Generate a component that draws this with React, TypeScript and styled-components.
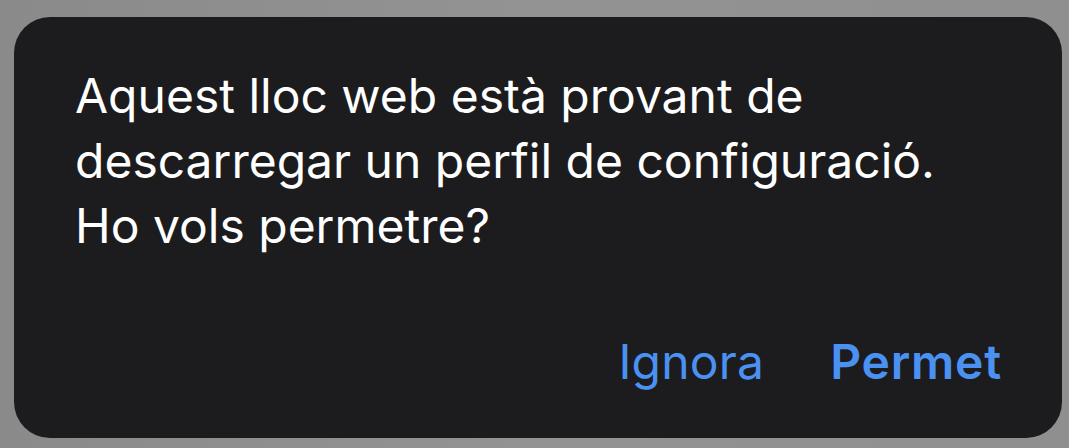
import styled, { createGlobalStyle } from "styled-components";

const GlobalStyle = createGlobalStyle`
  html, body {
    margin: 0;
    padding: 0;
  }
  body {
    width: 1069px;
    height: 448px;
    overflow: hidden;
    background: linear-gradient(90deg, #8a8a8a 0%, #939393 50%, #8f8f8f 100%);
    font-family: Inter, "Noto Sans", "Liberation Sans", sans-serif;
  }
`;

const Screen = styled.div`
  box-sizing: border-box;
  width: 1069px;
  height: 448px;
  padding: 17px 8px 10px 14px;
`;

const Alert = styled.div`
  box-sizing: border-box;
  width: 1048px;
  height: 421px;
  border-radius: 36px;
  background: #1c1c1e;
  padding: 46px 60px 46px 61px;
  display: flex;
  flex-direction: column;
  justify-content: space-between;
`;

const Message = styled.p`
  margin: 0;
  color: #ffffff;
  font-size: 48px;
  line-height: 65px;
`;

const Actions = styled.div`
  display: flex;
  justify-content: flex-end;
  align-items: baseline;
  gap: 66px;
`;

const ActionButton = styled.button<{ $primary?: boolean }>`
  border: none;
  background: none;
  padding: 0;
  font-family: inherit;
  font-size: 48px;
  line-height: 60px;
  letter-spacing: ${(p) => (p.$primary ? "0.8px" : "0.2px")};
  color: #4a91f2;
  font-weight: ${(p) => (p.$primary ? 600 : 400)};
  cursor: pointer;
`;

export default function App() {
  return (
    <>
      <GlobalStyle />
      <Screen>
        <Alert>
          <Message>
            Aquest lloc web està provant de
            <br />
            descarregar un perfil de configuració.
            <br />
            Ho vols permetre?
          </Message>
          <Actions>
            <ActionButton>Ignora</ActionButton>
            <ActionButton $primary>Permet</ActionButton>
          </Actions>
        </Alert>
      </Screen>
    </>
  );
}
